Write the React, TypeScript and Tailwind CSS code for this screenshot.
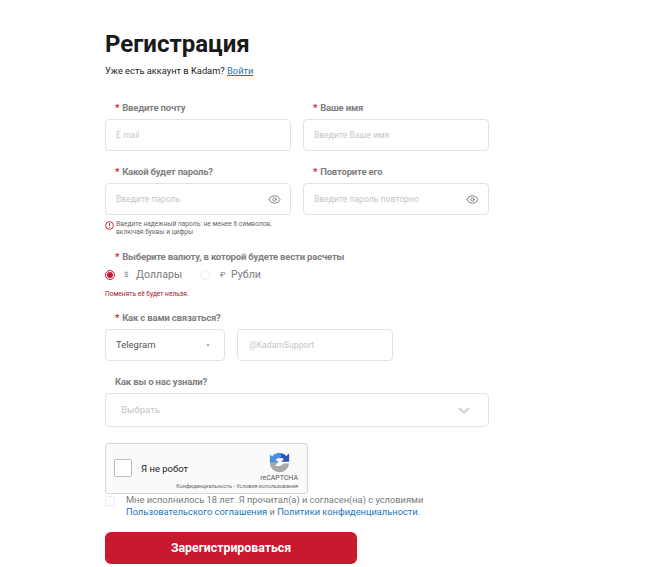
import React from 'react';
import { Eye } from 'lucide-react';

const Label = ({ text, required = true }: { text: string; required?: boolean }) => (
  <div className="pl-[10px] h-[12px] flex items-center text-[9.5px] tracking-[-0.18px] leading-[12px] font-bold text-[#808080] whitespace-nowrap">
    {required && <span className="text-[#c8192f] mr-[3px]">*</span>}
    {text}
  </div>
);

const Field = ({ label, placeholder, eye = false }: { label: string; placeholder: string; eye?: boolean }) => (
  <div className="w-[186px]">
    <Label text={label} />
    <div className="mt-[5px] h-[32px] border border-[#e3e3e3] rounded-[4px] pl-[10px] pr-[9px] flex items-center justify-between bg-white">
      <span className="text-[8.6px] text-[#c6c6c6]">{placeholder}</span>
      {eye && <Eye size={13} strokeWidth={1.5} className="text-[#666666]" />}
    </div>
  </div>
);

const RecaptchaLogo = () => (
  <svg width="21" height="21" viewBox="0 0 24 24">
    <path d="M1 11A11 11 0 0 0 23 13H17L13 16H7L11 10H1z" fill="#a9a9a9" />
    <path d="M12 1A11 11 0 0 0 3.5 5L1 2.5V12H11L7.5 9A6 6 0 0 1 12 7L14 4z" fill="#4a90e2" />
    <path d="M12 1A11 11 0 0 1 20 4.5L23 1.5V11H14L17 8A6 6 0 0 0 12 7L14 4z" fill="#2b55b5" />
  </svg>
);

export default function App() {
  return (
    <div className="w-[656px] h-[567px] overflow-hidden bg-white font-['Roboto',sans-serif]">
      <div className="ml-[105px] w-[384px] pt-[30px]">
        <h1 className="text-[24px] leading-[28px] font-bold text-[#1a1a1a]">Регистрация</h1>
        <p className="mt-[6px] text-[9.3px] leading-[14px] text-[#222222] whitespace-nowrap">
          Уже есть аккаунт в Kadam? <span className="text-[#1b75bb] underline">Войти</span>
        </p>

        <div className="mt-[24px] flex gap-[12px]">
          <Field label="Введите почту" placeholder="E mail" />
          <Field label="Ваше имя" placeholder="Введите Ваше имя" />
        </div>
        <div className="mt-[15px] flex gap-[12px]">
          <Field label="Какой будет пароль?" placeholder="Введите пароль" eye />
          <Field label="Повторите его" placeholder="Введите пароль повторно" eye />
        </div>

        <div className="mt-[5px] flex gap-[2px]">
          <svg width="9" height="9" viewBox="0 0 9 9" className="mt-[1px] shrink-0">
            <circle cx="4.5" cy="4.5" r="3.9" fill="none" stroke="#c8192f" strokeWidth="0.9" />
            <path d="M4.5 2v3M4.5 6v1" stroke="#c8192f" strokeWidth="0.9" />
          </svg>
          <p className="text-[6.65px] leading-[8px] text-[#666666] whitespace-nowrap">
            Введите надежный пароль: не менее 6 символов,
            <br />
            включая буквы и цифры
          </p>
        </div>

        <div className="mt-[15px]">
          <Label text="Выберите валюту, в которой будете вести расчеты" />
        </div>
        <div className="mt-[5px] h-[14px] flex items-center text-[10.6px] text-[#7b7b7b]">
          <span className="w-[10px] h-[10px] rounded-full border border-[#c8192f] flex items-center justify-center">
            <span className="w-[6px] h-[6px] rounded-full bg-[#c8192f]" />
          </span>
          <span className="ml-[9px] text-[8px] w-[5px]">$</span>
          <span className="ml-[7px] w-[46px]">Доллары</span>
          <span className="ml-[18px] w-[10px] h-[10px] rounded-full border border-[#eeeeee]" />
          <span className="ml-[10px] text-[8px] w-[6px]">₽</span>
          <span className="ml-[5px]">Рубли</span>
        </div>
        <p className="mt-[7px] text-[6.6px] leading-[10px] text-[#a3162a]">Поменять её будет нельзя.</p>

        <div className="mt-[13px]">
          <Label text="Как с вами связаться?" />
        </div>
        <div className="mt-[5px] flex gap-[12px]">
          <div className="w-[120px] h-[32px] border border-[#e3e3e3] rounded-[4px] pl-[10px] pr-[14px] flex items-center justify-between">
            <span className="text-[9.5px] text-[#555555]">Telegram</span>
            <span className="w-0 h-0 border-x-[2.5px] border-x-transparent border-t-[3px] border-t-[#bbbbbb]" />
          </div>
          <div className="w-[156px] h-[32px] border border-[#e3e3e3] rounded-[4px] pl-[11px] flex items-center">
            <span className="text-[8.6px] text-[#c6c6c6]">@KadamSupport</span>
          </div>
        </div>

        <div className="mt-[15px]">
          <Label text="Как вы о нас узнали?" required={false} />
        </div>
        <div className="mt-[5px] h-[34px] border border-[#e3e3e3] rounded-[4px] pl-[15px] pr-[18px] flex items-center justify-between">
          <span className="text-[9.6px] text-[#c6c6c6]">Выбрать</span>
          <svg width="12" height="7" viewBox="0 0 12 7" fill="none">
            <path d="M1 1l5 4.5L11 1" stroke="#cfcfcf" strokeWidth="2" />
          </svg>
        </div>

        <div className="mt-[16px] w-[203px] h-[51px] border border-[#d6d6d6] rounded-[3px] bg-[#fafafa] flex relative">
          <span className="ml-[8px] mt-[15px] w-[18px] h-[18px] border-[1.5px] border-[#bdbdbd] rounded-[2px] bg-white" />
          <span className="ml-[9px] mt-[19px] text-[9.5px] leading-[12px] text-[#222222]">Я не робот</span>
          <div className="absolute right-[9px] top-[8px] flex flex-col items-center">
            <RecaptchaLogo />
            <span className="mt-[1px] text-[7px] leading-[8px] text-[#555555]">reCAPTCHA</span>
          </div>
          <span className="absolute right-[9px] bottom-[4px] text-[5.4px] leading-[6px] text-[#666666] whitespace-nowrap">
            Конфиденциальность - Условия использования
          </span>
        </div>

        <div className="flex">
          <span className="mt-[2px] w-[10px] h-[10px] border border-[#eeeeee] rounded-[2px]" />
          <p className="ml-[11px] text-[9.3px] leading-[12px] text-[#7b7b7b] whitespace-nowrap">
            Мне исполнилось 18 лет. Я прочитал(а) и согласен(на) с условиями
            <br />
            <span className="text-[#1b75bb]">Пользовательского соглашения</span> и{' '}
            <span className="text-[#1b75bb]">Политики конфиденциальности.</span>
          </p>
        </div>

        <button className="mt-[14px] w-[252px] h-[32px] rounded-[6px] bg-[#c8192f] text-white text-[12.3px] font-bold flex items-center justify-center">
          Зарегистрироваться
        </button>
      </div>
    </div>
  );
}
